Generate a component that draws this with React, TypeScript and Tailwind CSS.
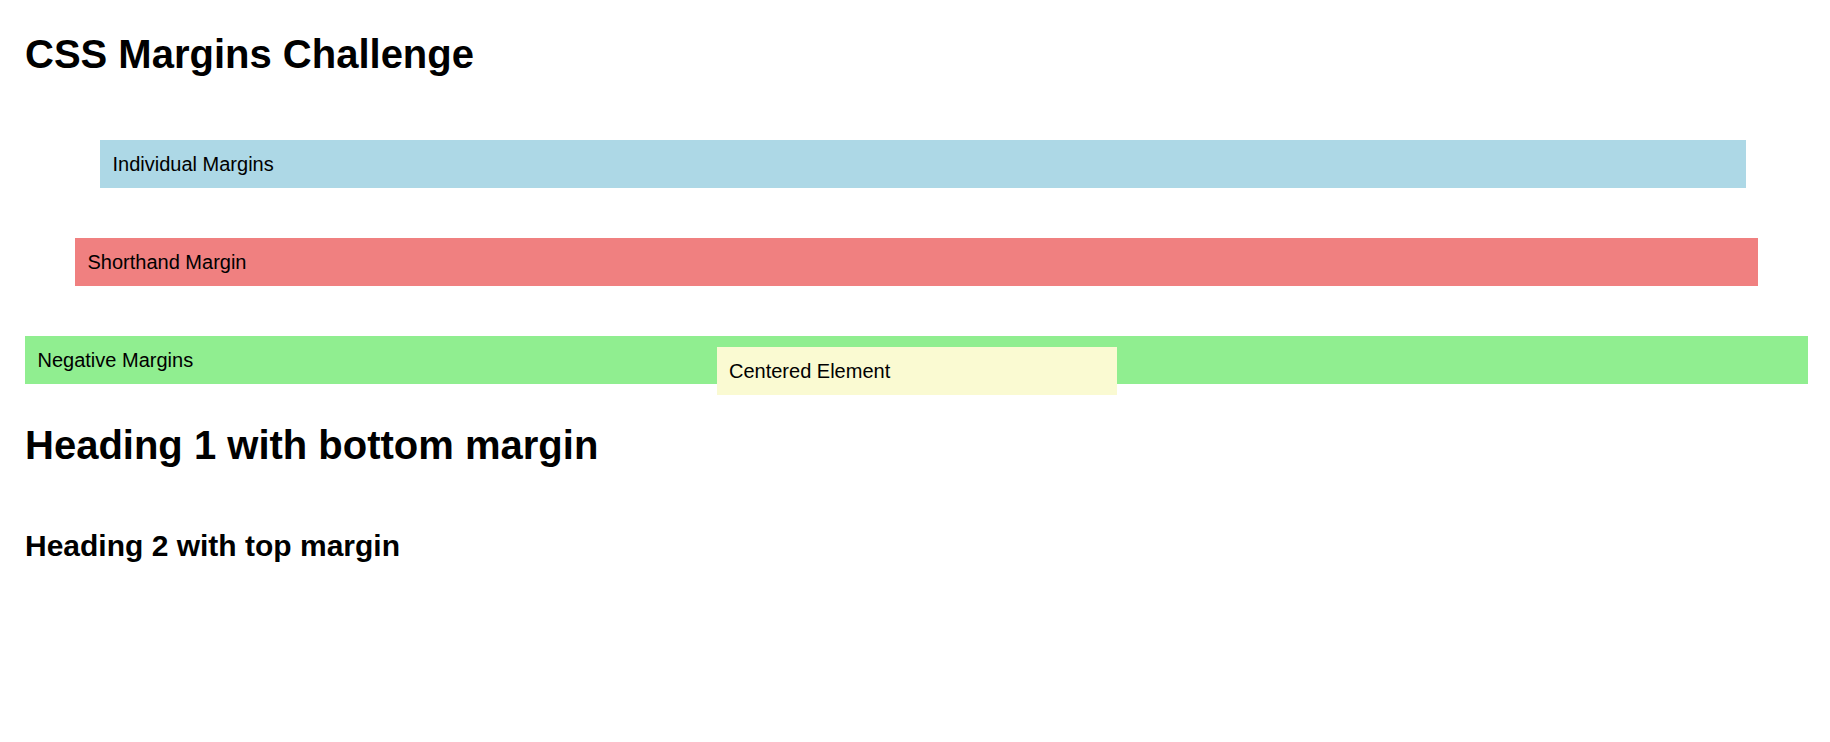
import React from "react";

export default function App() {
  return (
    <div className="flow-root min-h-[742px] bg-white pl-[25px] pr-[22px] font-['Liberation_Sans',Arial,sans-serif] text-black">
      <h1 className="mt-[31px] text-[40px] font-bold leading-[46px]">CSS Margins Challenge</h1>
      <div className="mt-[63px] ml-[75px] mr-[62.5px] bg-[#add8e6] px-[12.5px] py-[12.5px] text-[20px] leading-[23px]">
        Individual Margins
      </div>
      <div className="mt-[50px] mx-[50px] bg-[#f08080] px-[12.5px] py-[12.5px] text-[20px] leading-[23px]">
        Shorthand Margin
      </div>
      <div className="mt-[50px] bg-[#90ee90] px-[12.5px] py-[12.5px] text-[20px] leading-[23px]">
        Negative Margins
      </div>
      <div className="mt-[-37px] mx-auto w-[400px] bg-[#fafad2] px-[12.5px] py-[12.5px] text-[20px] leading-[23px]">
        Centered Element
      </div>
      <h1 className="mt-[26.8px] text-[40px] font-bold leading-[46px]">Heading 1 with bottom margin</h1>
      <h2 className="mt-[61px] text-[30px] font-bold leading-[34.5px]">Heading 2 with top margin</h2>
    </div>
  );
}
